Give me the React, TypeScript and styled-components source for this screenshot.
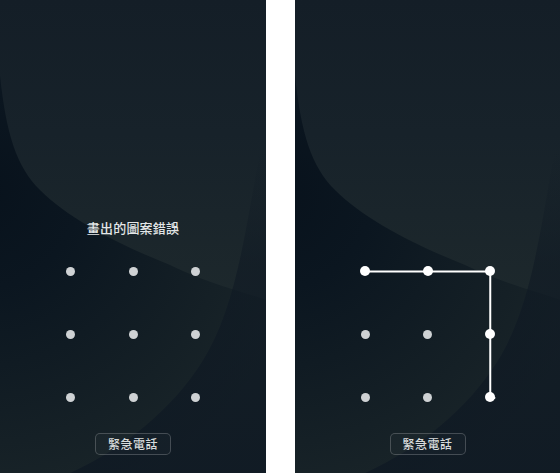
import styled, { createGlobalStyle } from 'styled-components';
import { useId } from 'react';

const GlobalStyle = createGlobalStyle`
  html, body {
    margin: 0;
    padding: 0;
    background: #ffffff;
  }
  body {
    font-family: "Noto Sans CJK TC", "Noto Sans", sans-serif;
  }
`;

const CELL_W = 62.5;
const CELL_H = 63;

// 0..8, row by row
const TRACE = [0, 1, 2, 5, 8];

const Wallpaper = ({ width }: { width: number }) => {
  const id = useId().replace(/:/g, '');
  return (
    <WallpaperSvg viewBox={`0 0 ${width} 473`} width={width} height={473}>
      <defs>
        <radialGradient id={`base${id}`} cx="-20" cy="190" r="330" gradientUnits="userSpaceOnUse">
          <stop offset="0" stopColor="#08121c" />
          <stop offset="0.3" stopColor="#0b1620" />
          <stop offset="1" stopColor="#1a2529" />
        </radialGradient>
        <linearGradient id={`shape${id}`} x1="0" y1="0" x2="0" y2="295" gradientUnits="userSpaceOnUse">
          <stop offset="0" stopColor="#141e27" />
          <stop offset="0.45" stopColor="#17222a" />
          <stop offset="1" stopColor="#1d282c" />
        </linearGradient>
        <linearGradient id={`edge${id}`} x1="0" y1="150" x2="0" y2="473" gradientUnits="userSpaceOnUse">
          <stop offset="0" stopColor="#0e1823" stopOpacity="0" />
          <stop offset="0.35" stopColor="#0e1823" stopOpacity="0.55" />
          <stop offset="1" stopColor="#0e1823" stopOpacity="0.75" />
        </linearGradient>
      </defs>
      <rect x="0" y="0" width={width} height="473" fill={`url(#base${id})`} />
      <path
        d={`M -1 -1 H ${width + 1} V 300 C 235 290 200 280 170 265 C 120 245 70 220 40 190 C 15 165 5 130 -1 65 Z`}
        fill={`url(#shape${id})`}
      />
      <path
        d={`M ${width + 1} 120 C 248 200 242 300 202 362 C 172 410 122 450 68 474 L ${width + 1} 474 Z`}
        fill={`url(#edge${id})`}
      />
    </WallpaperSvg>
  );
};

const cellCenter = (i: number) => ({
  x: CELL_W / 2 + (i % 3) * CELL_W,
  y: CELL_H / 2 + Math.floor(i / 3) * CELL_H,
});

const LockScreen = ({ width, message, trace }: { width: number; message?: string; trace?: number[] }) => {
  const active = new Set(trace ?? []);
  const points = (trace ?? []).map(cellCenter);
  const last = points[points.length - 1];

  return (
    <Screen $w={width}>
      <Wallpaper width={width} />
      <Content>
        <Message $visible={!!message}>{message ?? ' '}</Message>
        <PatternGrid>
          {Array.from({ length: 9 }, (_, i) => (
            <Cell key={i}>
              <Dot $active={active.has(i)} />
            </Cell>
          ))}
          {points.length > 1 && (
            <TraceSvg width={CELL_W * 3} height={CELL_H * 3}>
              <polyline
                points={points.map(p => `${p.x},${p.y}`).join(' ')}
                fill="none"
                stroke="#ffffff"
                strokeWidth="2"
                strokeLinejoin="round"
              />
              <line x1={last.x} y1={last.y} x2={last.x + 5} y2={last.y + 0.5} stroke="#ffffff" strokeWidth="2" />
            </TraceSvg>
          )}
        </PatternGrid>
        <EmergencyButton type="button">緊急電話</EmergencyButton>
      </Content>
    </Screen>
  );
};

export default function App() {
  return (
    <>
      <GlobalStyle />
      <Page>
        <LockScreen width={266} message="畫出的圖案錯誤" />
        <LockScreen width={265} trace={TRACE} />
      </Page>
    </>
  );
}

const Page = styled.div`
  display: flex;
  gap: 29px;
  width: 560px;
  height: 473px;
`;

const Screen = styled.div<{ $w: number }>`
  position: relative;
  width: ${({ $w }) => $w}px;
  height: 473px;
  overflow: hidden;
  background: #151f28;
  flex-shrink: 0;
`;

const WallpaperSvg = styled.svg`
  position: absolute;
  inset: 0;
  display: block;
`;

const Content = styled.div`
  position: relative;
  z-index: 1;
  box-sizing: border-box;
  height: 100%;
  padding-top: 219px;
  display: flex;
  flex-direction: column;
  align-items: center;
`;

const Message = styled.div<{ $visible: boolean }>`
  height: 18px;
  font-size: 13px;
  line-height: 18px;
  font-weight: 500;
  color: #e3e6e7;
  letter-spacing: 0.2px;
  visibility: ${({ $visible }) => ($visible ? 'visible' : 'hidden')};
`;

const PatternGrid = styled.div`
  position: relative;
  margin-top: 2.5px;
  display: grid;
  grid-template-columns: repeat(3, ${CELL_W}px);
  grid-auto-rows: ${CELL_H}px;
`;

const Cell = styled.div`
  display: flex;
  align-items: center;
  justify-content: center;
`;

const Dot = styled.span<{ $active: boolean }>`
  width: ${({ $active }) => ($active ? 10 : 9)}px;
  height: ${({ $active }) => ($active ? 10 : 9)}px;
  border-radius: 50%;
  background: ${({ $active }) => ($active ? '#ffffff' : '#cfd2d4')};
`;

const TraceSvg = styled.svg`
  position: absolute;
  left: 0;
  top: 0;
  pointer-events: none;
`;

const EmergencyButton = styled.button`
  margin-top: 4.5px;
  box-sizing: border-box;
  width: 76px;
  height: 22px;
  padding: 0;
  border: 1px solid rgba(255, 255, 255, 0.2);
  border-radius: 5px;
  background: rgba(255, 255, 255, 0.02);
  color: #d8dbdc;
  font-family: "Noto Sans CJK TC", "Noto Sans", sans-serif;
  font-size: 12px;
  font-weight: 500;
  line-height: 20px;
  letter-spacing: 0.5px;
  cursor: pointer;
`;
